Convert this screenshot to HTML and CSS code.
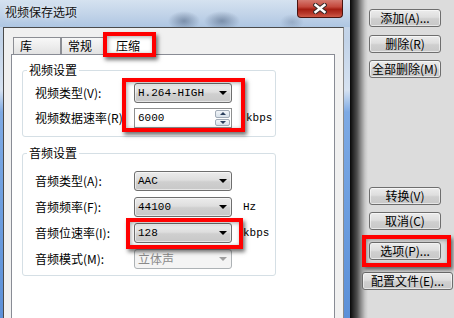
FILE: index.html
```html
<!DOCTYPE html>
<html lang="zh-CN">
<head>
  <meta charset="UTF-8">
  <title>视频保存选项</title>
  <link rel="stylesheet" href="styles.css">
</head>
<body>
  <div class="desktop">
    <div class="window">
      <div class="titlebar">
        <span class="title">视频保存选项</span>
        <button class="close">
          <svg width="14" height="11" viewBox="0 0 14 11">
            <path d="M2.5 2 L11.5 9 M11.5 2 L2.5 9" stroke="#3a2a2a" stroke-width="4.5" stroke-linecap="square"/>
            <path d="M2.5 2 L11.5 9 M11.5 2 L2.5 9" stroke="#ffffff" stroke-width="2.4" stroke-linecap="square"/>
          </svg>
        </button>
      </div>

      <div class="client">
        <div class="tabs">
          <div class="tab tab-lib">库</div>
          <div class="tab tab-gen">常规</div>
          <div class="tab active">压缩</div>
        </div>

        <div class="panel">
          <fieldset class="group group-video">
            <legend>视频设置</legend>
            <div class="row">
              <label>视频类型(V):</label>
              <div class="combo"><span class="val">H.264-HIGH</span><span class="arrow"></span></div>
            </div>
            <div class="row">
              <label>视频数据速率(R):</label>
              <div class="spin">
                <span class="val">6000</span>
                <span class="spin-btns"><span class="spin-up"></span><span class="spin-down"></span></span>
              </div>
              <span class="unit unit-first">kbps</span>
            </div>
          </fieldset>

          <fieldset class="group group-audio">
            <legend>音频设置</legend>
            <div class="row">
              <label>音频类型(A):</label>
              <div class="combo"><span class="val">AAC</span><span class="arrow"></span></div>
            </div>
            <div class="row">
              <label>音频频率(F):</label>
              <div class="combo"><span class="val">44100</span><span class="arrow"></span></div>
              <span class="unit">Hz</span>
            </div>
            <div class="row">
              <label>音频位速率(I):</label>
              <div class="combo"><span class="val">128</span><span class="arrow"></span></div>
              <span class="unit">kbps</span>
            </div>
            <div class="row">
              <label>音频模式(M):</label>
              <div class="combo disabled"><span class="val cjk">立体声</span><span class="arrow"></span></div>
            </div>
          </fieldset>
        </div>
      </div>
    </div>

    <div class="side">
      <button class="btn btn-add">添加(A)...</button>
      <button class="btn btn-del">删除(R)</button>
      <button class="btn btn-delall">全部删除(M)</button>
      <button class="btn btn-convert">转换(V)</button>
      <button class="btn btn-cancel">取消(C)</button>
      <button class="btn btn-opt">选项(P)...</button>
      <button class="btn btn-profile">配置文件(E)...</button>
    </div>
  </div>

  <!-- red annotation boxes drawn over the screenshot -->
  <div class="mark mark-tab"></div>
  <div class="mark mark-video"></div>
  <div class="mark mark-rate"></div>
  <div class="mark mark-opt"></div>
</body>
</html>
```

FILE: styles.css
```css
body {
  margin: 0;
  width: 454px;
  height: 318px;
  overflow: hidden;
  position: relative;
  background: #dcdcdc;
  font-family: "Noto Sans CJK SC", sans-serif;
  font-size: 12px;
  line-height: 16px;
  color: #000;
}

.desktop {
  display: flex;
  height: 318px;
}

/* dialog window */

.window {
  width: 350px;
  flex: none;
  display: flex;
  flex-direction: column;
  overflow: hidden;
  background: linear-gradient(to bottom, #cad8ea 0, #c2d3e8 40px, #d6e2f1 90px, #7eaae4 112px, #6e9fe0 200px, #5c90d8 100%);
}

.titlebar {
  flex: none;
  height: 27px;
  display: flex;
  align-items: flex-start;
  background:
    radial-gradient(ellipse 16px 10px at 184px 21px, rgba(50, 70, 100, 0.45), rgba(50, 70, 100, 0) 100%),
    radial-gradient(ellipse 18px 10px at 222px 21px, rgba(50, 70, 100, 0.45), rgba(50, 70, 100, 0) 100%),
    radial-gradient(ellipse 12px 8px at 292px 22px, rgba(60, 80, 110, 0.25), rgba(60, 80, 110, 0) 100%),
    linear-gradient(to bottom, #d5e2f0 0, #c1d3e8 55%, #aec6e2 100%);
}

.title {
  margin: 4px 0 0 5px;
  color: #111;
  text-shadow: 0 0 5px rgba(255, 255, 255, 0.9);
}

.close {
  margin-left: auto;
  margin-right: 7px;
  width: 46px;
  height: 18px;
  padding: 0;
  border: 1px solid #4a1410;
  border-top: none;
  border-radius: 0 0 4px 4px;
  background: linear-gradient(to bottom, #d57a70 0, #c4483c 40%, #a41e12 55%, #b83a2c 80%, #cf5a48 100%);
  display: flex;
  align-items: center;
  justify-content: center;
}

.client {
  flex: 1;
  min-height: 0;
  display: flex;
  flex-direction: column;
  margin: 0 6px 0 3px;
  padding: 5px 8px 0 7px;
  background: #f0f0f0;
  border-top: 1px solid #4a4a4a;
  border-left: 1px solid #4a4a4a;
  border-right: 1px solid #8a8a8a;
}

/* tabs */

.tabs {
  flex: none;
  display: flex;
  align-items: flex-end;
  height: 21px;
  padding-left: 2px;
}

.tab {
  box-sizing: border-box;
  height: 17px;
  padding-left: 6px;
  border: 1px solid #8c8e94;
  border-bottom: none;
  background: linear-gradient(to bottom, #f8f8f8, #e2e2e2);
  line-height: 16px;
}

.tab-lib {
  width: 48px;
}

.tab-gen {
  width: 46px;
}

.tab.active {
  position: relative;
  z-index: 1;
  width: 50px;
  height: 22px;
  margin: 0 0 -1px -2px;
  padding: 4px 0 0 10px;
  background: #fff;
}

.panel {
  flex: 1;
  padding: 7px 0 0 10px;
  border: 1px solid #898c95;
  border-bottom: none;
  background: #fff;
}

/* group boxes */

.group {
  width: 254px;
  box-sizing: border-box;
  margin: 0;
  border: 1px solid #d5dfe5;
  border-radius: 3px;
}

.group legend {
  margin-left: -8px;
  padding: 0 2px;
  line-height: 16px;
}

.group-video {
  padding: 5px 0 8px 12px;
}

.group-audio {
  margin-top: 8px;
  padding: 10px 0 6px 12px;
}

.row {
  display: flex;
  align-items: center;
  height: 20px;
}

.group-video .row + .row {
  margin-top: 5px;
}

.group-audio .row + .row {
  margin-top: 6px;
}

.row label {
  width: 99px;
  flex: none;
  white-space: nowrap;
  overflow: hidden;
}

.val {
  flex: 1;
  font-family: "Liberation Mono", monospace;
  font-size: 11px;
}

.val.cjk {
  font-family: "Noto Sans CJK SC", sans-serif;
  font-size: 12px;
}

.combo {
  width: 98px;
  height: 20px;
  box-sizing: border-box;
  display: flex;
  align-items: center;
  padding: 0 4px 0 3px;
  border: 1px solid #6e6e6e;
  border-radius: 3px;
  background: linear-gradient(to bottom, #ececec 0, #dedede 45%, #cfcfcf 55%, #c8c8c8 100%);
  box-shadow: inset 0 0 0 1px rgba(255, 255, 255, 0.55);
}

.arrow {
  width: 0;
  height: 0;
  border-left: 4px solid transparent;
  border-right: 4px solid transparent;
  border-top: 4px solid #000;
}

.combo.disabled {
  border-color: #adb2b5;
  background: #f4f4f4;
  box-shadow: none;
  color: #8a8a8a;
}

.combo.disabled .arrow {
  border-top-color: #a0a0a0;
}

.spin {
  width: 98px;
  height: 20px;
  box-sizing: border-box;
  display: flex;
  align-items: center;
  padding: 0 1px 0 3px;
  border: 1px solid #8e8f8f;
  background: #fff;
}

.spin-btns {
  width: 15px;
  height: 16px;
  display: flex;
  flex-direction: column;
  gap: 1px;
}

.spin-up,
.spin-down {
  flex: 1;
  display: flex;
  align-items: center;
  justify-content: center;
  border: 1px solid #a2acb8;
  border-radius: 2px;
  background: linear-gradient(to bottom, #f2f5f8, #d8e1ea);
}

.spin-up::after {
  content: '';
  border-left: 3px solid transparent;
  border-right: 3px solid transparent;
  border-bottom: 3px solid #2a3e5c;
}

.spin-down::after {
  content: '';
  border-left: 3px solid transparent;
  border-right: 3px solid transparent;
  border-top: 3px solid #2a3e5c;
}

.unit {
  margin-left: 11px;
  font-family: "Liberation Mono", monospace;
  font-size: 11px;
}

.unit-first {
  margin-left: 14px;
}

/* right button column behind the dialog */

.side {
  flex: 1;
  display: flex;
  flex-direction: column;
  align-items: flex-start;
  padding-top: 9px;
  background: linear-gradient(to right, #080808 0, #262626 3px, #4e4e4e 7px, #8e8e8e 11px, #c6c6c6 15px, #dcdcdc 18px, #dcdcdc 100%);
}

.btn {
  width: 72px;
  height: 18px;
  box-sizing: border-box;
  margin-left: 19px;
  padding: 0;
  border: 1px solid #6e6e6e;
  border-radius: 3px;
  background: linear-gradient(to bottom, #ececec 0, #dedede 45%, #cfcfcf 55%, #c8c8c8 100%);
  box-shadow: inset 0 0 0 1px rgba(255, 255, 255, 0.55);
  font: inherit;
  line-height: 16px;
  color: #000;
  text-align: center;
}

.btn-del { margin-top: 8px; }
.btn-delall { margin-top: 7px; }
.btn-convert { margin-top: 109px; }
.btn-cancel { margin-top: 7px; }
.btn-opt { margin-top: 12px; }

.btn-profile {
  width: 91px;
  margin: 12px 0 0 12px;
}

/* annotations */

.mark {
  position: absolute;
  box-sizing: border-box;
  border: 4px solid #ff0000;
  box-shadow: 2px 3px 4px rgba(0, 0, 0, 0.55), inset 1px 1px 4px rgba(0, 0, 0, 0.35);
  z-index: 5;
}

.mark-tab {
  left: 103px;
  top: 32px;
  width: 53px;
  height: 25px;
}

.mark-video {
  left: 122px;
  top: 78px;
  width: 123px;
  height: 54px;
}

.mark-rate {
  left: 126px;
  top: 218px;
  width: 117px;
  height: 31px;
}

.mark-opt {
  left: 362px;
  top: 235px;
  width: 89px;
  height: 32px;
}
```
